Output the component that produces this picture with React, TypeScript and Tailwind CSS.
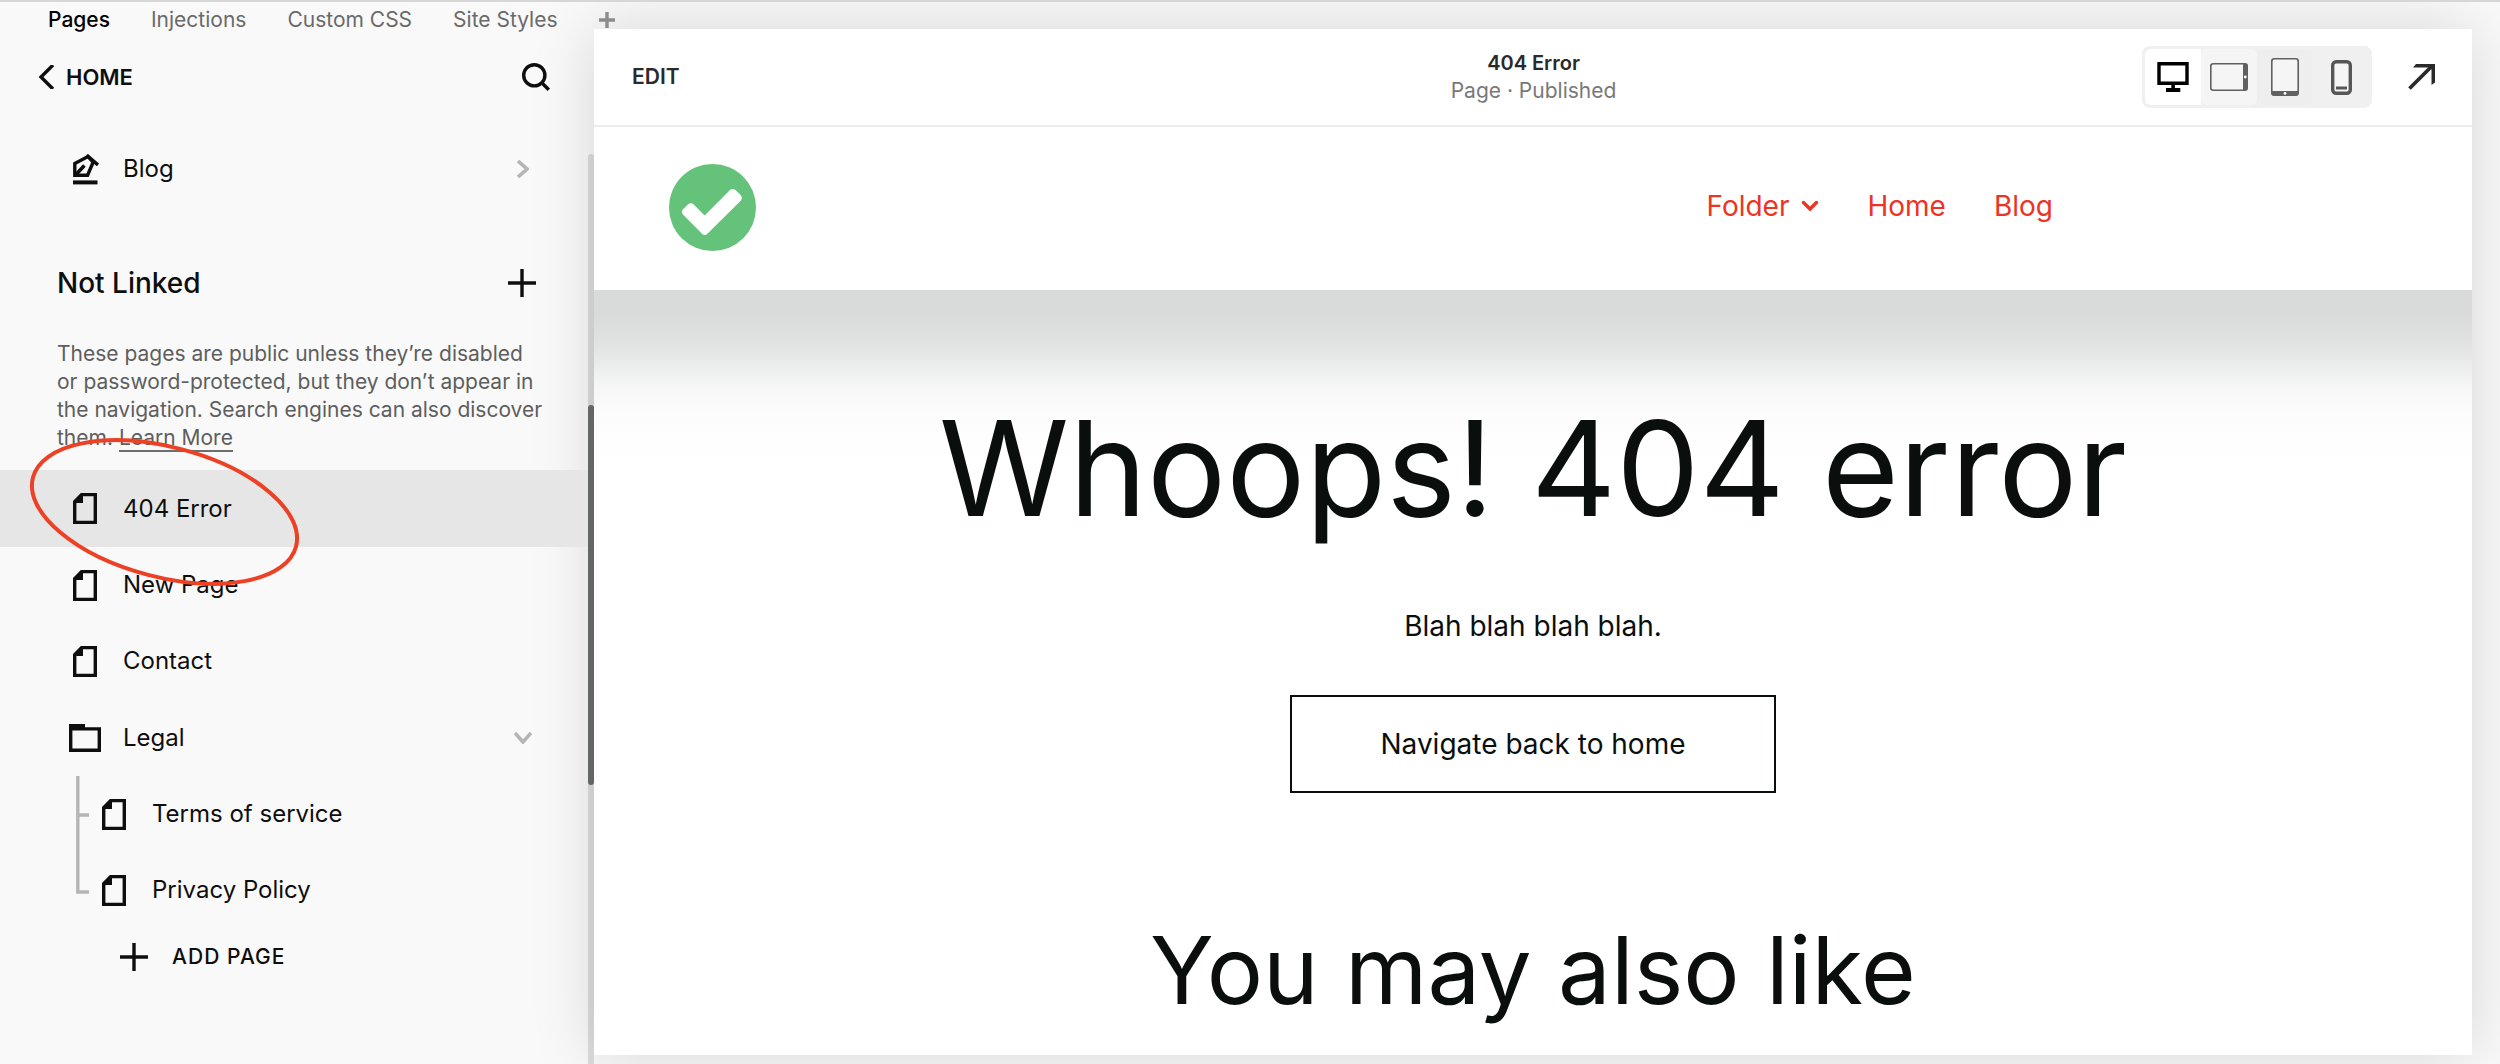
import React from 'react';

interface IconProps {
  className?: string;
}

interface PageRowProps {
  label: string;
  active?: boolean;
}

const tabs = ['Pages', 'Injections', 'Custom CSS', 'Site Styles'];

const PlusIcon: React.FC<IconProps> = ({ className }) => (
  <svg viewBox="0 0 28 28" className={className} stroke="currentColor" strokeWidth="3.4" fill="none">
    <path d="M14 0v28M0 14h28" />
  </svg>
);

const PageIcon: React.FC = () => (
  <svg viewBox="0 0 24 31" className="h-[31px] w-6 shrink-0" fill="none">
    <path d="M9 1.6h13.3v27.8H1.7V9.5z" stroke="currentColor" strokeWidth="3.4" />
    <path d="M8 0h2v10H0V8z" fill="currentColor" />
  </svg>
);

const FolderIcon: React.FC = () => (
  <svg viewBox="0 0 32 28" className="h-7 w-8 shrink-0" fill="none">
    <path d="M1.7 4.9h28.6v21.4H1.7z" stroke="currentColor" strokeWidth="3.4" />
    <path d="M0 0h16v6H0z" fill="currentColor" />
  </svg>
);

const BlogIcon: React.FC = () => (
  <svg viewBox="0 0 26 31" className="h-[31px] w-[26px] shrink-0" fill="none" stroke="currentColor">
    <path d="M1.8 9.6L15 2.6L20.2 8L14.6 21.2H1.8z" strokeWidth="3.4" />
    <path d="M13.6 1.2L25 11" strokeWidth="3.6" />
    <path d="M3 20.5L11.4 11.6" strokeWidth="3.6" />
    <path d="M0 28.4h24.5" strokeWidth="4" />
  </svg>
);

const ChevronIcon: React.FC<IconProps> = ({ className }) => (
  <svg viewBox="0 0 18 12" className={className} fill="none" stroke="currentColor" strokeWidth="3.6">
    <path d="M1 1l8 9l8-9" />
  </svg>
);

const PageRow: React.FC<PageRowProps> = ({ label, active }) => (
  <a
    href="#"
    className={`flex items-center pl-[73px] text-2xl ${active ? 'h-[77px] bg-[#e6e6e6]' : 'h-[76px]'}`}
  >
    <PageIcon />
    <span className="ml-[26px]">{label}</span>
  </a>
);

const Sidebar: React.FC = () => (
  <aside className="flex w-[594px] shrink-0 text-[#0e0e0e]">
    <div className="min-w-0 flex-1">
      <div className="flex h-24 items-center justify-between px-[38px]">
        <a href="#" className="flex items-center gap-3 text-[22px] font-semibold">
          <svg viewBox="0 0 16 24" className="h-6 w-4" fill="none" stroke="currentColor" strokeWidth="3.4">
            <path d="M15 0L3 12l12 12" />
          </svg>
          HOME
        </a>
        <button type="button" aria-label="Search">
          <svg viewBox="0 0 28 28" className="size-7" fill="none" stroke="currentColor" strokeWidth="3.4">
            <circle cx="12.3" cy="12.3" r="10.6" />
            <path d="M19.5 19.5l7.3 7.3" />
          </svg>
        </button>
      </div>

      <a href="#" className="mt-1.5 flex h-[76px] items-center pr-[56px] pl-[73px] text-2xl">
        <BlogIcon />
        <span className="ml-6 flex-1">Blog</span>
        <ChevronIcon className="h-3 w-[18px] -rotate-90 text-[#b5b5b5]" />
      </a>

      <div className="mt-14 flex h-10 items-center justify-between pr-[52px] pl-[57px]">
        <h2 className="text-[28px] font-medium">Not Linked</h2>
        <button type="button" aria-label="Add page to Not Linked">
          <PlusIcon className="size-7" />
        </button>
      </div>
      <p className="mt-[37px] pb-[18px] pl-[57px] text-[21px] leading-7 text-[#5e5e5e]">
        These pages are public unless they’re disabled
        <br />
        or password-protected, but they don’t appear in
        <br />
        the navigation. Search engines can also discover
        <br />
        them.{' '}
        <a href="#" className="border-b-2 border-[#6e6e6e]">
          Learn More
        </a>
      </p>

      <nav>
        <div className="relative">
          <PageRow label="404 Error" active />
          <svg
            viewBox="0 0 280 160"
            className="pointer-events-none absolute -top-[38px] left-6 z-10 h-[160px] w-[280px]"
            fill="none"
          >
            <ellipse
              cx="140.5"
              cy="80"
              rx="136"
              ry="65"
              transform="rotate(14.7 140.5 80)"
              stroke="#ec4124"
              strokeWidth="4"
            />
          </svg>
        </div>
        <PageRow label="New Page" />
        <PageRow label="Contact" />
        <button type="button" className="flex h-[77px] w-full items-center pr-[56px] pl-[69px] text-left text-2xl">
          <FolderIcon />
          <span className="ml-[22px] flex-1">Legal</span>
          <ChevronIcon className="h-3 w-[18px] text-[#b5b5b5]" />
        </button>
        <div className="flex pl-[76px]">
          <svg viewBox="0 0 13 152" className="-mr-[60px] h-[152px] w-[13px]" fill="none" stroke="#b5b5b5" strokeWidth="3.4">
            <path d="M1.8 0v116H13M1.8 39H13" />
          </svg>
          <div>
            <PageRow label="Terms of service" />
            <PageRow label="Privacy Policy" />
          </div>
        </div>
        <button type="button" className="flex h-[58px] items-center gap-6 pl-[120px] text-[21px] font-medium tracking-wider">
          <PlusIcon className="size-7" />
          ADD PAGE
        </button>
      </nav>
    </div>

    <div className="mt-[125px] w-[6px] rounded-t-full bg-[#dcdcdc] pt-[251px]">
      <div className="h-[380px] rounded-full bg-[#6c6e6e]"></div>
    </div>
  </aside>
);

const DeviceSwitcher: React.FC = () => (
  <div className="flex rounded-lg bg-[#f0f0f0] p-[3px] text-[#606060]">
    <button type="button" aria-label="Desktop" className="flex h-14 w-14 items-center justify-center rounded-l-md bg-white text-black">
      <svg viewBox="0 0 32 30" className="h-[30px] w-8" fill="none">
        <path d="M2 1.7h28v19.6H2z" stroke="currentColor" strokeWidth="3.4" />
        <path d="M14.3 22h3.6v4h5.4v4H9v-4h5.3z" fill="currentColor" />
      </svg>
    </button>
    <button type="button" aria-label="Tablet landscape" className="flex h-14 w-14 items-center justify-center rounded-md bg-[#f5f5f5]">
      <svg viewBox="0 0 38 28" className="h-7 w-[38px]" fill="none">
        <rect x="0.8" y="0.8" width="36.4" height="26.4" rx="2.5" stroke="currentColor" strokeWidth="1.6" />
        <path d="M33 0.5h2.5a2 2 0 0 1 2 2v23a2 2 0 0 1-2 2H33z" fill="currentColor" />
        <circle cx="35.3" cy="14" r="1.4" fill="white" />
      </svg>
    </button>
    <button type="button" aria-label="Tablet portrait" className="flex h-14 w-14 items-center justify-center rounded-md bg-[#eeeeee]">
      <svg viewBox="0 0 28 38" className="h-[38px] w-7" fill="none">
        <rect x="0.8" y="0.8" width="26.4" height="36.4" rx="2.5" fill="#f5f5f5" stroke="currentColor" strokeWidth="1.6" />
        <path d="M0.5 33h27v2.5a2 2 0 0 1-2 2h-23a2 2 0 0 1-2-2z" fill="currentColor" />
        <circle cx="14" cy="35.4" r="1.4" fill="white" />
      </svg>
    </button>
    <button type="button" aria-label="Phone" className="flex h-14 w-14 items-center justify-center rounded-md text-[#565656]">
      <svg viewBox="0 0 21 35" className="h-[35px] w-[21px]" fill="none">
        <rect x="1.7" y="1.7" width="17.6" height="31.6" rx="3.5" fill="#f5f5f5" stroke="currentColor" strokeWidth="3.4" />
        <path d="M5 28h11" stroke="currentColor" strokeWidth="3" />
      </svg>
    </button>
  </div>
);

const Preview: React.FC = () => (
  <main className="flex min-w-0 flex-1 flex-col bg-white shadow-[0_0_60px_rgba(0,0,0,0.14)]">
    <header className="grid h-[98px] grid-cols-[1fr_auto_1fr] items-center border-b-2 border-[#ececec] pr-[37px] pl-[38px] text-[#2a2a2a]">
      <button type="button" className="justify-self-start text-[21px] font-semibold">
        EDIT
      </button>
      <div className="text-center text-[21px] leading-7">
        <div className="text-xl leading-7 font-semibold">404 Error</div>
        <div className="text-[#787878]">Page · Published</div>
      </div>
      <div className="flex items-center gap-9 justify-self-end">
        <DeviceSwitcher />
        <a href="#" aria-label="Open site">
          <svg viewBox="0 0 27 26" className="h-[26px] w-[27px]" fill="none" stroke="currentColor">
            <path d="M1.5 24.5L23.5 2.5" strokeWidth="3.8" />
            <path d="M5 3.6L8 0H27V18.5L23.5 21V5.5L22 3.6z" fill="currentColor" stroke="none" />
          </svg>
        </a>
      </div>
    </header>

    <header className="flex h-[163px] items-center justify-between pr-[419px] pb-[2px] pl-[75px]">
      <a href="#" aria-label="Site home">
        <svg viewBox="0 0 87 87" className="size-[87px]">
          <circle cx="43.5" cy="43.5" r="43.5" fill="#65c27b" />
          <path
            d="M14 45.2q-2.2 2.6 0 5.2L33 69.8q2.7 2.4 5.4 0L72 36.5q1.8-2.6 0-5.2L66.5 26q-3-1.8-5.5 0L35.7 51.5L24.5 40.2q-2.7-2-5.4 0z"
            fill="white"
          />
        </svg>
      </a>
      <nav className="flex items-center gap-12 pb-1 text-[28px] text-[#ed3324]">
        <a href="#" className="flex items-center gap-3">
          Folder
          <svg viewBox="0 0 18 12" className="h-3 w-[18px]" fill="none" stroke="currentColor" strokeWidth="3.4" strokeLinecap="round">
            <path d="M2.5 2.5L9 9l6.5-6.5" />
          </svg>
        </a>
        <a href="#">Home</a>
        <a href="#">Blog</a>
      </nav>
    </header>

    <section className="flex flex-1 flex-col items-center bg-[linear-gradient(#d9dbda_15%,#e2e4e3_34%,#f5f6f5_56%,#fcfcfc_72%,#fff)] bg-[length:100%_170px] bg-no-repeat pt-[114px] text-[#0a0f0e]">
      <h1 className="text-[132px] leading-[128px]">Whoops! 404 error</h1>
      <p className="mt-[74px] text-[28px] leading-10">Blah blah blah blah.</p>
      <a
        href="#"
        className="mt-[49px] flex h-[98px] items-center border-2 border-[#0a0f0e] px-[88px] text-[28px]"
      >
        Navigate back to home
      </a>
      <h2 className="mt-[129px] text-[94px] leading-[96px]">You may also like</h2>
    </section>
  </main>
);

const App: React.FC = () => {
  return (
    <div className="flex min-h-screen flex-col overflow-hidden border-t-2 border-[#d6d6d6] bg-[#f9f9f9] font-['Inter',sans-serif]">
      <nav className="relative z-10 flex h-[27px] items-center gap-[41px] pt-2 pl-[48px] text-[21px] text-[#6a6a6a]">
        {tabs.map((tab, index) => (
          <a key={tab} href="#" className={index === 0 ? 'font-medium text-black' : ''}>
            {tab}
          </a>
        ))}
        <button type="button" aria-label="Add tab" className="text-[#8c8c8c]">
          <svg viewBox="0 0 16 16" className="size-4" stroke="currentColor" strokeWidth="3.4">
            <path d="M8 0v16M0 8h16" />
          </svg>
        </button>
      </nav>
      <div className="flex flex-1">
        <Sidebar />
        <div className="flex min-w-0 flex-1 pr-7 pb-[9px]">
          <Preview />
        </div>
      </div>
    </div>
  );
};

export default App;
